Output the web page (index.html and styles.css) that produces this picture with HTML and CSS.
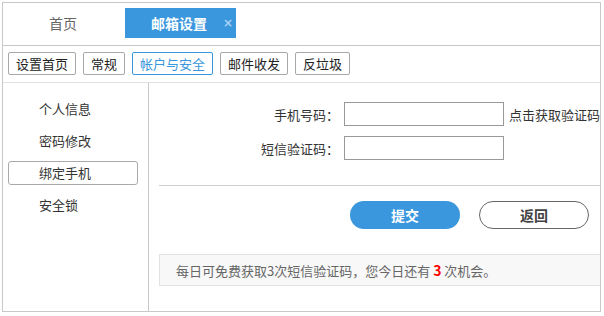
FILE: index.html
```html
<!DOCTYPE html>
<html lang="zh">
<head>
<meta charset="utf-8">
<link rel="stylesheet" href="styles.css">
</head>
<body>
<div class="frame">
  <div class="tabs">
    <div class="tab-home">首页</div>
    <div class="tab-active"><span class="tab-title">邮箱设置</span><span class="tab-close">×</span></div>
  </div>
  <div class="subnav">
    <button class="sub-btn">设置首页</button>
    <button class="sub-btn">常规</button>
    <button class="sub-btn sub-on">帐户与安全</button>
    <button class="sub-btn">邮件收发</button>
    <button class="sub-btn">反垃圾</button>
  </div>
  <div class="body">
    <ul class="side">
      <li class="side-item">个人信息</li>
      <li class="side-item">密码修改</li>
      <li class="side-item side-on">绑定手机</li>
      <li class="side-item">安全锁</li>
    </ul>
    <div class="main">
      <div class="form">
        <div class="row">
          <label class="lbl">手机号码：</label>
          <input class="inp" type="text">
          <span class="get-code">点击获取验证码</span>
        </div>
        <div class="row">
          <label class="lbl">短信验证码：</label>
          <input class="inp" type="text">
        </div>
      </div>
      <div class="divider"></div>
      <div class="actions">
        <button class="btn btn-primary">提交</button>
        <button class="btn btn-back">返回</button>
      </div>
      <div class="notice">每日可免费获取3次短信验证码，您今日还有 <b class="count">3</b> 次机会。</div>
    </div>
  </div>
</div>
</body>
</html>
```
FILE: styles.css
```css
* { box-sizing: border-box; }
body {
  margin: 0;
  background: #fff;
  font-family: "Noto Sans CJK SC", "Microsoft YaHei", sans-serif;
  font-size: 13px;
  color: #333;
}
.frame {
  margin: 2px 0 0 2px;
  width: 599px;
  height: 310px;
  border: 1px solid #c8c8c8;
  display: flex;
  flex-direction: column;
  overflow: hidden;
}
.tabs {
  height: 43px;
  border-bottom: 1px solid #c8c8c8;
  display: flex;
  align-items: flex-start;
  padding-top: 5px;
  flex: none;
}
.tab-home {
  width: 120px;
  height: 30px;
  line-height: 30px;
  text-align: center;
  font-size: 14px;
  color: #666;
}
.tab-active {
  margin-left: 2px;
  width: 111px;
  height: 30px;
  background: #3a97dd;
  color: #fff;
  font-weight: bold;
  font-size: 14px;
  display: flex;
  align-items: center;
  padding-left: 26px;
  white-space: nowrap;
  flex: none;
}
.tab-title {
  flex: none;
}
.tab-close {
  margin-left: 16px;
  font-size: 12px;
  color: #a9d2f2;
  font-weight: bold;
  font-family: "DejaVu Sans", sans-serif;
}
.subnav {
  height: 37px;
  border-bottom: 1px solid #e0e0e0;
  display: flex;
  align-items: flex-start;
  gap: 7px;
  padding: 6px 0 0 5px;
  flex: none;
}
.sub-btn {
  height: 23px;
  padding: 0 7px;
  border: 1px solid #a8a8a8;
  border-radius: 2px;
  background: #fff;
  font-family: inherit;
  font-size: 13px;
  color: #222;
  line-height: 21px;
}
.sub-on {
  border-color: #3a97dd;
  color: #3a97dd;
}
.body {
  flex: 1;
  display: flex;
}
.side {
  list-style: none;
  margin: 0;
  width: 146px;
  border-right: 1px solid #c8c8c8;
  padding: 14px 0 0 5px;
  display: flex;
  flex-direction: column;
  gap: 8px;
}
.side-item {
  width: 130px;
  height: 24px;
  line-height: 22px;
  padding-left: 30px;
  border: 1px solid transparent;
  border-radius: 3px;
  color: #333;
}
.side-on {
  border-color: #aaa;
}
.main {
  flex: 1;
  padding: 19px 0 0 10px;
  display: flex;
  flex-direction: column;
}
.form {
  display: flex;
  flex-direction: column;
  gap: 10px;
}
.row {
  display: flex;
  align-items: center;
  height: 24px;
}
.lbl {
  width: 180px;
  text-align: right;
  color: #333;
}
.inp {
  margin-left: 5px;
  width: 160px;
  height: 24px;
  border: 1px solid #999;
  padding: 0 4px;
  font-family: inherit;
}
.get-code {
  margin-left: 5px;
  color: #333;
}
.divider {
  margin-top: 25px;
  height: 1px;
  background: #d0d0d0;
}
.actions {
  margin-top: 15px;
  display: flex;
  gap: 19px;
  padding-left: 191px;
}
.btn {
  width: 110px;
  height: 28px;
  border-radius: 14px;
  font-family: inherit;
  font-size: 14px;
  font-weight: bold;
}
.btn-primary {
  background: #3a97dd;
  border: none;
  color: #fff;
}
.btn-back {
  background: #fff;
  border: 1px solid #666;
  color: #444;
}
.notice {
  margin-top: 25px;
  height: 32px;
  line-height: 30px;
  background: #f8f8f8;
  border: 1px solid #e2e2e2;
  border-right: none;
  padding-left: 16px;
  color: #666;
}
.count {
  color: #f00;
  font-size: 14px;
}
```
